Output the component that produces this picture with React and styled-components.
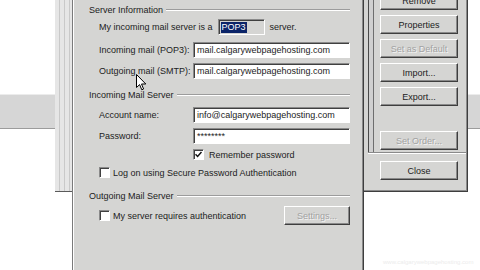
import { styled, createGlobalStyle } from "styled-components";

const Global = createGlobalStyle`
  html, body {
    margin: 0;
    padding: 0;
    background: #ffffff;
  }
  body {
    font-family: "Liberation Sans", Arial, sans-serif;
  }
`;

// the desktop itself: windows are placed on it
const Desktop = styled.div`
  position: relative;
  width: 480px;
  height: 270px;
  overflow: hidden;
  background: #ffffff;
  font-size: 9px;
  color: #1c1c1c;
`;

const BackBand = styled.div`
  position: absolute;
  left: 0;
  top: 94px;
  width: 480px;
  height: 33px;
  background: #d6d6d6;
  border-top: 1px solid #ececec;
  border-bottom: 1px solid #9c9c9c;
`;

const BackStrip = styled.div`
  position: absolute;
  left: 55px;
  top: 0;
  width: 17px;
  height: 191px;
  border-bottom: 1px solid #5a5a5a;
  background: repeating-linear-gradient(
    90deg,
    #e6e6e6 0px,
    #e6e6e6 4px,
    #c9c9c9 4px,
    #c9c9c9 5px
  );
`;

const Dialog = styled.div`
  position: absolute;
  left: 72px;
  top: 0;
  width: 292px;
  height: 280px;
  box-sizing: border-box;
  background: #d5d5d3;
  border-left: 1px solid #7a7a7a;
  border-right: 1px solid #3e3e3e;
  box-shadow: inset 1px 0 #ffffff, inset -1px 0 #8a8a8a;
  padding: 4px 13px 0 16px;
  display: flex;
  flex-direction: column;
`;

const Heading = styled.div`
  display: flex;
  align-items: center;
  height: 12px;
  margin-top: ${(p) => p.$mt || 0}px;
  white-space: nowrap;
`;

const HeadLine = styled.div`
  flex: 1;
  margin-left: 3px;
  border-top: 1px solid #9c9c9c;
  border-bottom: 1px solid #ffffff;
`;

const Row = styled.div`
  display: flex;
  align-items: center;
  height: ${(p) => p.$h || 16}px;
  margin-top: ${(p) => p.$mt || 0}px;
  padding-left: ${(p) => p.$indent ?? 10}px;
  white-space: nowrap;
`;

const Label = styled.span`
  width: ${(p) => (p.$w ? `${p.$w}px` : "auto")};
  flex-shrink: 0;
`;

const Field = styled.div`
  box-sizing: border-box;
  width: ${(p) => p.$w || 157}px;
  height: ${(p) => p.$h || 16}px;
  background: ${(p) => (p.$readOnly ? "#d5d5d3" : "#ffffff")};
  border: 1px solid;
  border-color: #8a8a8a #ffffff #ffffff #8a8a8a;
  box-shadow: inset 1px 1px #404040;
  padding: 0 3px;
  display: flex;
  align-items: center;
  overflow: hidden;
`;

const Selected = styled.span`
  background: #0b2468;
  color: #ffffff;
  padding: 0 1px;
  line-height: 11px;
`;

const Box = styled.div`
  box-sizing: border-box;
  width: 11px;
  height: 11px;
  flex-shrink: 0;
  background: #ffffff;
  border: 1px solid;
  border-color: #8a8a8a #ffffff #ffffff #8a8a8a;
  box-shadow: inset 1px 1px #404040;
  display: flex;
  align-items: center;
  justify-content: center;
  margin-right: ${(p) => p.$gap || 3}px;
`;

const Button = styled.div`
  box-sizing: border-box;
  width: ${(p) => p.$w || 78}px;
  height: 19px;
  flex-shrink: 0;
  margin-top: ${(p) => p.$mt || 0}px;
  margin-left: ${(p) => (p.$push ? "auto" : "0")};
  background: #d5d5d3;
  border: 1px solid;
  border-color: #ffffff #3e3e3e #3e3e3e #ffffff;
  box-shadow: inset -1px -1px #8a8a8a;
  display: flex;
  align-items: center;
  justify-content: center;
  color: ${(p) => (p.$disabled ? "#a2a2a2" : "#1c1c1c")};
  text-shadow: ${(p) => (p.$disabled ? "1px 1px #f4f4f4" : "none")};
`;

const Accounts = styled.div`
  position: absolute;
  left: 364px;
  top: -10px;
  width: 104px;
  height: 202px;
  box-sizing: border-box;
  background: #d5d5d3;
  border-right: 1px solid #3e3e3e;
  border-bottom: 1px solid #3e3e3e;
  box-shadow: inset -1px -1px #8a8a8a;
  display: flex;
  flex-direction: column;
`;

const TopPart = styled.div`
  display: flex;
  height: 162px;
  padding-left: 4px;
`;

const TabEdge = styled.div`
  width: 4px;
  border-left: 1px solid #4a4a4a;
  border-right: 1px solid #6e6e6e;
  background: #d0d0d0;
`;

const ButtonColumn = styled.div`
  display: flex;
  flex-direction: column;
  gap: 5px;
  padding: 1px 0 0 6px;
`;

const Separator = styled.div`
  margin-left: 4px;
  margin-right: 1px;
  border-top: 1px solid #8a8a8a;
  border-bottom: 1px solid #ffffff;
`;

const BottomPart = styled.div`
  display: flex;
  padding: 7px 0 0 16px;
`;

const Watermark = styled.div`
  position: absolute;
  left: 383px;
  top: 259px;
  font-size: 6px;
  color: #ececec;
  white-space: nowrap;
`;

const Cursor = styled.svg`
  position: absolute;
  left: 136px;
  top: 74px;
`;

function Check({ checked }) {
  return (
    <Box>
      {checked && (
        <svg width="7" height="7" viewBox="0 0 7 7">
          <path d="M0.5 3.2 L2.6 5.4 L6.5 1" fill="none" stroke="#111" strokeWidth="1.5" />
        </svg>
      )}
    </Box>
  );
}

function SectionHead({ title, mt }) {
  return (
    <Heading $mt={mt}>
      {title}
      <HeadLine />
    </Heading>
  );
}

export default function App() {
  const accountButtons = [
    { label: "Remove" },
    { label: "Properties" },
    { label: "Set as Default", disabled: true },
    { label: "Import..." },
    { label: "Export..." },
  ];

  return (
    <Desktop>
      <Global />
      <BackBand />
      <BackStrip />

      <Dialog>
        <SectionHead title="Server Information" />
        <Row $mt={3}>
          <Label>My incoming mail server is a</Label>
          <Field $w={47} $h={16} $readOnly style={{ marginLeft: 5, padding: "0 2px" }}>
            <Selected>POP3</Selected>
          </Field>
          <Label style={{ marginLeft: 5 }}>server.</Label>
        </Row>
        <Row $mt={7}>
          <Label $w={94}>Incoming mail (POP3):</Label>
          <Field>mail.calgarywebpagehosting.com</Field>
        </Row>
        <Row $mt={5}>
          <Label $w={94}>Outgoing mail (SMTP):</Label>
          <Field>mail.calgarywebpagehosting.com</Field>
        </Row>

        <SectionHead title="Incoming Mail Server" mt={10} />
        <Row $mt={6}>
          <Label $w={94}>Account name:</Label>
          <Field>info@calgarywebpagehosting.com</Field>
        </Row>
        <Row $mt={5}>
          <Label $w={94}>Password:</Label>
          <Field>********</Field>
        </Row>
        <Row $mt={5} $h={11} $indent={104}>
          <Check checked />
          <Label style={{ marginLeft: 2 }}>Remember password</Label>
        </Row>
        <Row $mt={7} $h={11}>
          <Check />
          <Label>Log on using Secure Password Authentication</Label>
        </Row>

        <SectionHead title="Outgoing Mail Server" mt={12} />
        <Row $mt={4} $h={19}>
          <Check />
          <Label>My server requires authentication</Label>
          <Button $w={66} $push $disabled>
            Settings...
          </Button>
        </Row>
      </Dialog>

      <Accounts>
        <TopPart>
          <TabEdge />
          <ButtonColumn>
            {accountButtons.map((b) => (
              <Button key={b.label} $disabled={b.disabled}>
                {b.label}
              </Button>
            ))}
            <Button $mt={20} $disabled>
              Set Order...
            </Button>
          </ButtonColumn>
        </TopPart>
        <Separator />
        <BottomPart>
          <Button>Close</Button>
        </BottomPart>
      </Accounts>

      <Watermark>www.calgarywebpagehosting.com</Watermark>

      <Cursor width="11" height="17" viewBox="0 0 11 17">
        <path
          d="M0.5 0.5 L0.5 13.5 L3.6 10.6 L5.8 15.8 L7.6 15 L5.5 10 L9.8 10 Z"
          fill="#ffffff"
          stroke="#000000"
          strokeWidth="1"
        />
      </Cursor>
    </Desktop>
  );
}
